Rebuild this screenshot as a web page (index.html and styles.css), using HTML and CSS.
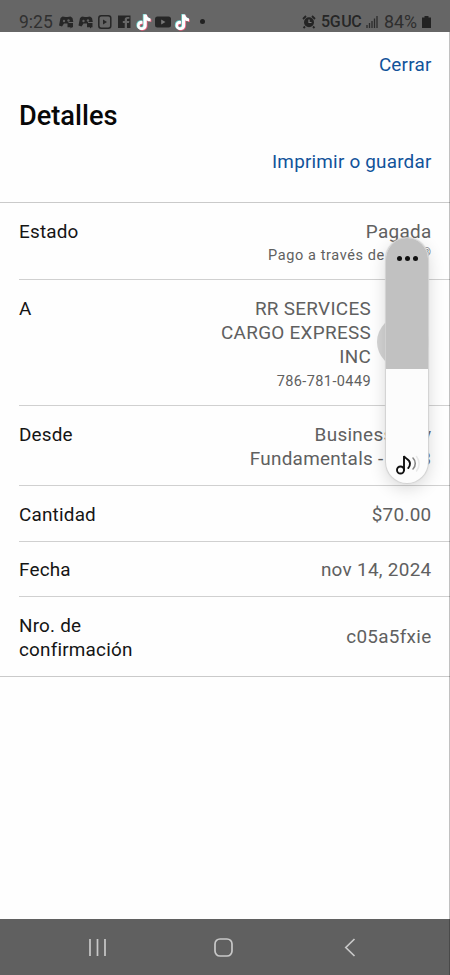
FILE: index.html
```html
<!DOCTYPE html>
<html lang="es">
<head>
<meta charset="utf-8">
<title>Detalles</title>
<link rel="stylesheet" href="styles.css">
</head>
<body>
<div class="screen">
  <header class="status">
    <span class="clock">9:25</span>
    <svg class="status-icons" width="144" height="18" viewBox="0 0 144 18" fill="#262626">
      <defs>
        <path id="tiktok" d="M6.500 0h3c.2 2 1.500 3.300 3.500 3.600v2.700c-1.400 0-2.500-.4-3.500-1.100v4.600c0 6-9 6-9 .4 0-2.800 2-4.600 5-4.400v2.700c-3.500-.5-3.200 3.500-.7 3.300 1.200-.1 1.700-.9 1.700-2z"/>
      </defs>
      <g id="chat"><path d="M0 12.500L1.500 5l2-1.500 3 .5h2l3-.5 2 1.500.8 4H9.500v1.500H5L3 13.500z"/><path d="M8.500 10H14v4.200h-1l-1.500 1.300v-1.300h-3z"/><circle cx="5" cy="8" r="1.200" fill="#606060"/><circle cx="9.500" cy="7.500" r="1.200" fill="#606060"/></g>
      <use href="#chat" x="19.500"/>
      <rect x="39.800" y="2.800" width="12" height="12.400" rx="2.500" fill="none" stroke="#262626" stroke-width="1.500"/>
      <path d="M44 6.500v5l4-2.500z"/>
      <path d="M59 2.500h12.500v12.500h-3.500v-5h2l.4-2H68V6.800c0-.8.4-1.100 1.100-1.100h1.300V4h-2c-1.800 0-2.700 1-2.700 2.700V8h-1.900v2h1.900v5H59z"/>
      <g id="tiktok-logo" transform="translate(77.500 1.600) scale(1.080)">
        <use href="#tiktok" x=".8" y=".6" fill="#e65c78"/><use href="#tiktok" x="-.7" y="-.5" fill="#69d2ce"/><use href="#tiktok" fill="#fff"/>
      </g>
      <rect x="96" y="3.500" width="16" height="11" rx="2.500"/>
      <path d="M102.200 6.500v5l4.300-2.500z" fill="#777"/>
      <use href="#tiktok-logo" x="38.500"/>
    </svg>
    <i class="more-dot"></i>
    <svg class="alarm" width="14" height="14" viewBox="0 0 14 14"><circle cx="7" cy="7.300" r="5" fill="#242424"/><path d="M1 4l3-3M13 4l-3-3M3 11.500l-1.500 1.500M11 11.500l1.500 1.500" stroke="#242424" stroke-width="1.800"/><path d="M7 4.500v3h2.500" fill="none" stroke="#777" stroke-width="1.200"/></svg>
    <span class="network">5G<span class="uc">UC</span></span>
    <svg class="signal" width="12" height="13" viewBox="0 0 12 13"><path d="M1 10v3M3.500 8v5M6 6v7M8.500 3.500V13M11 1v12" stroke="#2b2b2b" stroke-width="1.300"/></svg>
    <span class="percent">84%</span>
    <svg class="battery" width="9" height="12" viewBox="0 0 9 12"><path d="M2.500 1.500V0h4v1.500H9V12H0V1.500z" fill="#222"/></svg>
  </header>

  <main class="page">
    <a class="link close">Cerrar</a>
    <h1 class="title">Detalles</h1>
    <a class="link print">Imprimir o guardar</a>
    <dl class="details">
      <div class="row state"><dt>Estado</dt><dd>Pagada<small>Pago a través de Zelle<sup>®</sup></small></dd></div>
      <div class="row payee"><dt>A</dt><dd>RR SERVICES<br>CARGO EXPRESS<br>INC<small>786-781-0449</small></dd><i class="info"></i></div>
      <div class="row from"><dt>Desde</dt><dd>Business Adv<br>Fundamentals -<span class="covered"></span>3</dd></div>
      <div class="row"><dt>Cantidad</dt><dd>$70.00</dd></div>
      <div class="row"><dt>Fecha</dt><dd>nov 14, 2024</dd></div>
      <div class="row confirm"><dt>Nro. de<br>confirmación</dt><dd>c05a5fxie</dd></div>
    </dl>
  </main>

  <nav class="navbar">
    <svg width="450" height="56" viewBox="0 0 450 56" fill="none" stroke="#c8c8c8" stroke-width="1.700">
      <path d="M90 20v17M97.500 20v17M105 20v17"/>
      <rect x="215" y="20" width="17" height="17" rx="5"/>
      <path d="M354.500 20l-8.700 8.500 8.700 8.500"/>
    </svg>
  </nav>

  <div class="volume">
    <div class="level"><i></i><i></i><i></i></div>
    <svg class="sound" width="26" height="24" viewBox="0 0 26 24" fill="none" stroke="#111" stroke-width="1.900" stroke-linecap="round">
      <circle cx="4.500" cy="17" r="3.500"/><path d="M8 17V3c1 3 6 3 6 7.500 0 2-.7 3.500-1.700 4.500"/><path d="M17 5c3 3 3 8 0 11" stroke="#888" stroke-width="1.600"/><path d="M20.500 3.500c3.300 4.500 3.300 10 0 14.500" stroke="#e8e8e8" stroke-width="1.500"/>
    </svg>
  </div>
  <i class="edge"></i>
</div>
</body>
</html>
```
FILE: styles.css
```css
* { box-sizing: border-box; }
body { margin: 0; background: #fff; font-family: Roboto, "Liberation Sans", sans-serif; }
.screen { position: relative; width: 450px; height: 975px; display: flex; flex-direction: column; overflow: hidden; background: #fefefe; }
.status { height: 32px; flex: none; padding: 11px 0 0 19px; background: #666; color: #262626; display: flex; align-items: center; font-size: 17px; }
.clock { width: 34px; font-size: 17.500px; margin-right: 6px; color: #303030; }
.status-icons { flex: none; overflow: visible; }
.more-dot { width: 5px; height: 5px; border-radius: 50%; background: #222; margin-left: -3px; }
.alarm { margin-left: 97px; }
.network { margin-left: 5px; width: 41px; font-size: 16px; font-weight: 500; letter-spacing: -.4px; white-space: nowrap; }
.uc { margin-left: 1px; }
.signal { margin-left: 4px; }
.percent { margin-left: 6px; width: 36px; font-size: 17.800px; color: #2e2e2e; }
.battery { margin-left: 2px; }
.page { flex: 1; display: flex; flex-direction: column; padding-top: 21px; }
.link { align-self: flex-end; margin-right: 18.500px; font-size: 18.900px; line-height: 24px; letter-spacing: .2px; color: #11539a; }
.title { margin: 22px 0 0 19px; font-size: 27.200px; line-height: 34px; font-weight: 500; color: #080808; }
.print { margin-top: 17px; }
.details { margin: 28px 0 0; border-top: 1px solid #cacaca; border-bottom: 1px solid #cacaca; font-size: 18.900px; line-height: 24.400px; letter-spacing: .3px; }
.row { position: relative; margin-left: 19px; padding: 16.500px 18.500px 0 0; height: 55.600px; display: flex; justify-content: space-between; border-bottom: 1px solid #d0d0d0; }
dt { color: #151515; letter-spacing: .2px; }
dd { margin: 0; text-align: right; color: #606060; }
small { display: block; font-size: 14.500px; line-height: 24px; letter-spacing: .6px; }
sup { font-size: 10px; line-height: 0; vertical-align: 4px; }
.state { height: 77px; }
.payee { height: 126px; padding-right: 79px; }
.payee small { letter-spacing: .4px; }
.from { height: 80px; }
.confirm { height: 79px; border-bottom: 0; }
.confirm dd { align-self: center; margin-bottom: 15px; }
.covered { display: inline-block; width: 37px; }
.info { position: absolute; right: 21px; top: 36px; width: 52px; height: 52px; border-radius: 50%; background: #d4d4d4; }
.navbar { height: 56px; flex: none; background: #606060; }
.navbar svg { display: block; }
.volume { position: absolute; left: 386px; top: 238px; width: 42px; height: 245px; border-radius: 21px; overflow: hidden; background: #fcfcfc; box-shadow: 0 0 1px 1px #d2d2d2, 0 5px 17px rgba(0,0,0,.16); }
.level { height: 131px; background: #c1c1c1; display: flex; justify-content: center; gap: 3px; padding-top: 18px; }
.level i { width: 5px; height: 5px; border-radius: 50%; background: #111; }
.sound { position: absolute; left: 10px; top: 215px; }
.edge { position: absolute; right: 0; top: 32px; width: 1px; height: 943px; background: rgba(0,0,0,.24); }
```
